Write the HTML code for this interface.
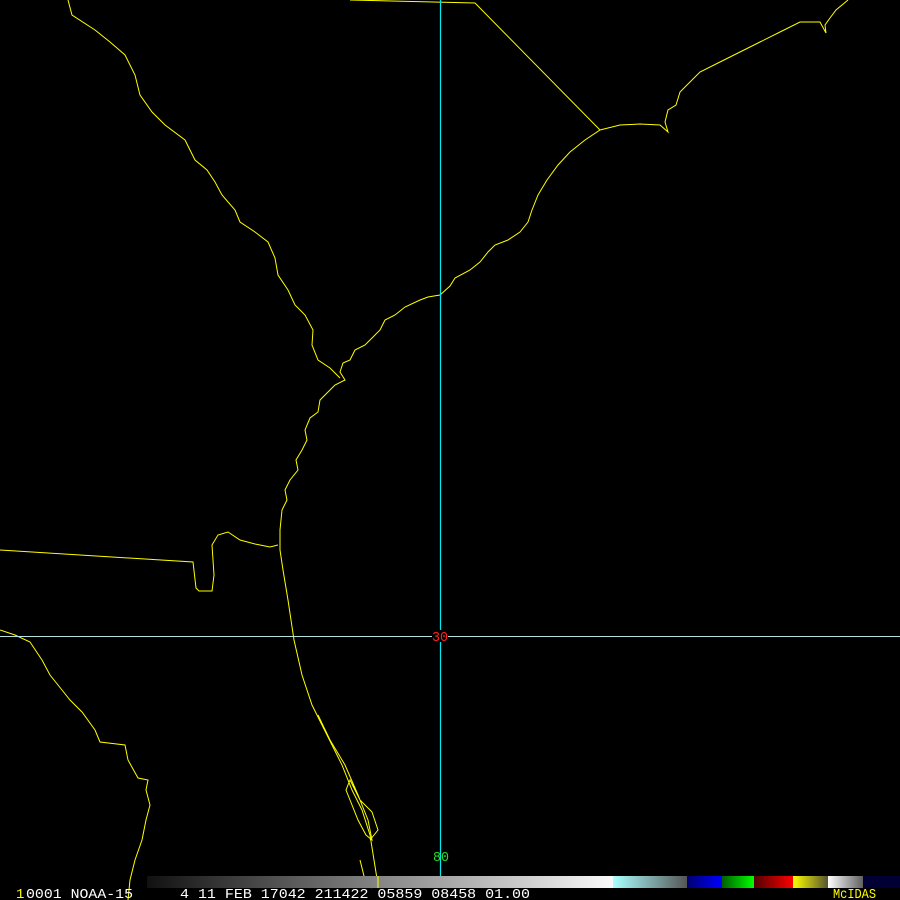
<!DOCTYPE html>
<html><head><style>
html,body{margin:0;padding:0;background:#000;width:900px;height:900px;overflow:hidden}
svg{display:block}
text{font-family:"Liberation Mono",monospace;font-size:14px}
</style></head><body>
<svg width="900" height="900" viewBox="0 0 900 900" xmlns="http://www.w3.org/2000/svg">
<rect width="900" height="900" fill="#000"/>
<g fill="none" stroke="#ffff00" stroke-width="1">
<polyline points="848,0 836,10 830,18 825,25 826,33 820,22 800,22 780,32 760,42 740,52 720,62 700,72 688,84 680,92 676,105 668,110 665,122 668,132 660,125 640,124 620,125 600,130 585,140 570,152 558,165 547,180 538,195 532,210 528,222 520,232 508,240 495,245 488,252 480,262 470,270 455,278 450,286 440,295 428,297 420,300 405,307 395,315 385,320 380,330 370,340 365,345 355,350 350,360 343,363 340,372 345,380 335,385 330,390 320,400 318,412 310,418 305,430 307,440 302,450 296,460 298,470 290,480 285,490 287,500 282,510 280,530 280,550 283,570 288,600 294,640 302,675 312,705 322,725 332,745 342,765 352,790 362,810 370,835 374,860 378,885"/>
<polyline points="350,0 475,3 600,130"/>
<polyline points="68,0 72,15 95,30 110,42 125,55 135,75 140,95 152,112 165,125 185,140 195,160 207,170 215,182 222,195 235,210 240,222 255,232 268,242 275,258 278,275 288,290 295,305 305,315 313,330 312,345 318,360 330,368 340,378"/>
<polyline points="0,550 193,562 196,588 199,591 212,591 214,575 212,545 218,535 228,532 240,540 255,544 270,547 278,545"/>
<polyline points="0,630 15,635 30,642 42,660 50,675 62,690 70,700 82,712 95,730 100,742 125,745 128,760 138,778 148,780 146,790 150,805 146,820 142,840 135,860 130,880 128,900"/>
<polyline points="318,715 330,740 345,765 358,795 368,820 372,840 366,835 358,820 350,800 346,790 350,780 360,800 372,812 378,830 370,840"/>
<polyline points="360,860 365,880 372,888"/>
</g>
<line x1="0" y1="636.5" x2="900" y2="636.5" stroke="#b8e0e0" stroke-width="1"/>
<line x1="440.5" y1="0" x2="440.5" y2="876" stroke="#00e8f0" stroke-width="1.2"/>
<rect x="432" y="630" width="16" height="12" fill="#000"/>
<text x="432" y="641" fill="#ff2020" textLength="16" lengthAdjust="spacingAndGlyphs">30</text>
<text x="433" y="861" fill="#22e022" textLength="16" lengthAdjust="spacingAndGlyphs">80</text>
<defs>
<linearGradient id="g1" x1="0" x2="1"><stop offset="0" stop-color="#111"/><stop offset="1" stop-color="#fafafa"/></linearGradient>
<linearGradient id="g2" x1="0" x2="1"><stop offset="0" stop-color="#aaffff"/><stop offset="1" stop-color="#555"/></linearGradient>
<linearGradient id="g3" x1="0" x2="1"><stop offset="0" stop-color="#000070"/><stop offset="1" stop-color="#0000ff"/></linearGradient>
<linearGradient id="g4" x1="0" x2="1"><stop offset="0" stop-color="#006000"/><stop offset="1" stop-color="#00ff00"/></linearGradient>
<linearGradient id="g5" x1="0" x2="1"><stop offset="0" stop-color="#500000"/><stop offset="1" stop-color="#ff0000"/></linearGradient>
<linearGradient id="g6" x1="0" x2="1"><stop offset="0" stop-color="#ffff00"/><stop offset="1" stop-color="#555530"/></linearGradient>
<linearGradient id="g7" x1="0" x2="1"><stop offset="0" stop-color="#fff"/><stop offset="1" stop-color="#606060"/></linearGradient>
</defs>
<rect x="147" y="876" width="466" height="12" fill="url(#g1)"/>
<rect x="613" y="876" width="74" height="12" fill="url(#g2)"/>
<rect x="687" y="876" width="35" height="12" fill="url(#g3)"/>
<rect x="722" y="876" width="32" height="12" fill="url(#g4)"/>
<rect x="754" y="876" width="39" height="12" fill="url(#g5)"/>
<rect x="793" y="876" width="35" height="12" fill="url(#g6)"/>
<rect x="828" y="876" width="35" height="12" fill="url(#g7)"/>
<rect x="863" y="876" width="37" height="12" fill="#000035"/>
<line x1="378" y1="876" x2="378" y2="888" stroke="#ff0" stroke-width="1"/>
<text x="16" y="898" fill="#ffff00" font-size="12">1</text>
<text x="26" y="898" fill="#fff" textLength="107" lengthAdjust="spacingAndGlyphs">0001 NOAA-15</text>
<text x="180" y="898" fill="#fff" textLength="350" lengthAdjust="spacingAndGlyphs">4 11 FEB 17042 211422 05859 08458 01.00</text>
<text x="833" y="898" fill="#ffff00" textLength="43" lengthAdjust="spacingAndGlyphs">McIDAS</text>
</svg>
</body></html>
